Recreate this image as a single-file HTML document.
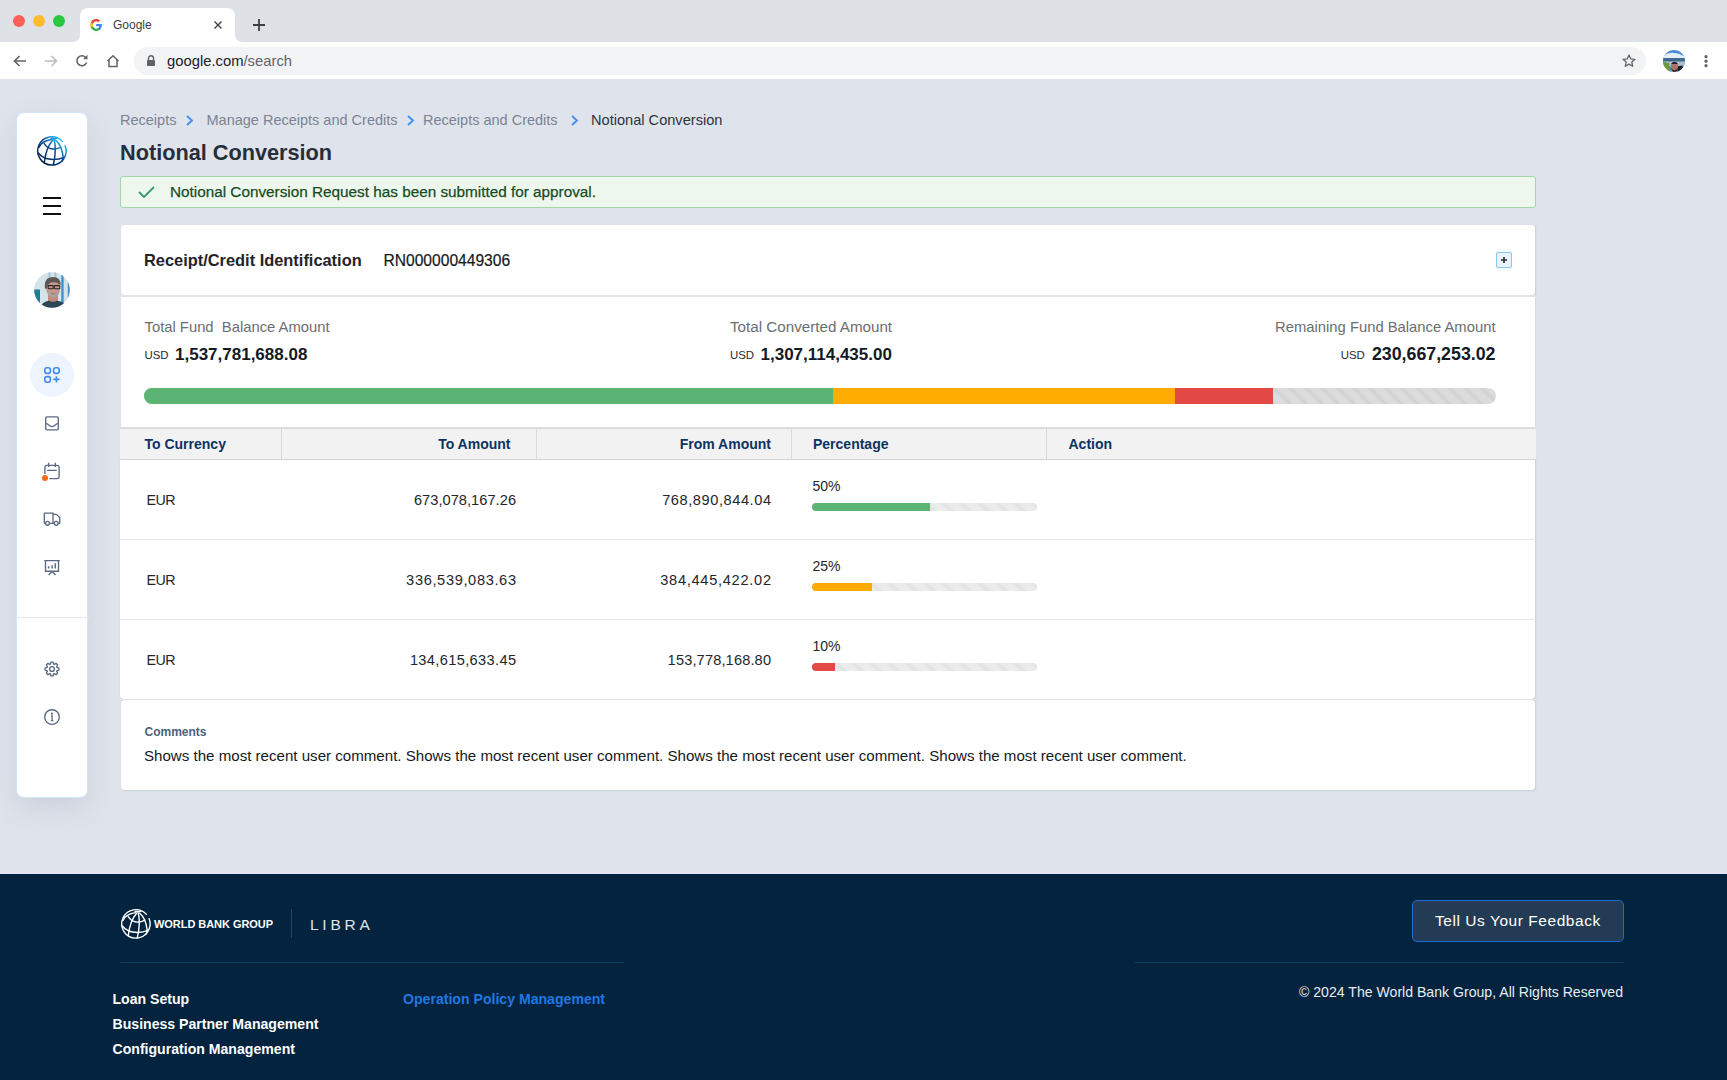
<!DOCTYPE html>
<html><head><meta charset="utf-8">
<style>
*{margin:0;padding:0;box-sizing:border-box}
html,body{width:1727px;height:1080px;overflow:hidden;background:#dfe3eb;font-family:"Liberation Sans",sans-serif}
.a{position:absolute;white-space:nowrap;line-height:1}
svg{position:absolute;overflow:visible}
#tabbar{position:absolute;left:0;top:0;width:1727px;height:42px;background:#dee1e6}
#toolbar{position:absolute;left:0;top:42px;width:1727px;height:37px;background:#fff}
.dot{position:absolute;width:12px;height:12px;border-radius:50%}
#tab{position:absolute;left:80px;top:8px;width:155px;height:34px;background:#fff;border-radius:8px 8px 0 0}
#pill{position:absolute;left:134px;top:47px;width:1512px;height:28px;background:#f1f3f4;border-radius:14px}
#side{position:absolute;left:17px;top:113px;width:70px;height:684px;background:#fff;border-radius:7px;box-shadow:0 0 0 1px #d3e5fb,0 10px 26px rgba(100,110,140,.17)}
.card{position:absolute;left:120px;width:1415px;background:#fff;box-shadow:.5px .5px 1.5px rgba(0,0,0,.09)}
.bc{font-size:14.5px;color:#7b8594;top:113px}
.lbl{font-size:14.8px;color:#6b6e73;top:320px}
.usd{font-size:11.4px;color:#262a30;top:350px}
.amt{font-size:17px;font-weight:700;color:#141a24;top:346px}
.th{font-size:14px;font-weight:700;color:#0c3363;top:437px}
.td{font-size:14.6px;color:#22262b}
.pct{font-size:14px;color:#22262b}
.pbar{position:absolute;left:812px;width:225px;height:8px;border-radius:4px;overflow:hidden;
 background:repeating-linear-gradient(45deg,#ebebeb 0 6.5px,#e3e3e3 9px,#e3e3e3 10.5px,#ebebeb 12.7px)}
.pbar i{position:absolute;left:0;top:0;height:8px}
.fl{font-size:14.1px;font-weight:700;color:#fff}
</style></head><body>

<!-- ============ BROWSER CHROME ============ -->
<div id="tabbar"></div>
<div class="dot" style="left:13px;top:15.3px;background:#fe5f57"></div>
<div class="dot" style="left:33px;top:15.3px;background:#febc2e"></div>
<div class="dot" style="left:53px;top:15.3px;background:#28c840"></div>
<div id="tab"></div>
<!-- tab flares -->
<svg style="left:72px;top:34px" width="8" height="8"><path d="M0 8 Q8 8 8 0 L8 8 Z" fill="#fff"/></svg>
<svg style="left:235px;top:34px" width="8" height="8"><path d="M8 8 Q0 8 0 0 L0 8 Z" fill="#fff"/></svg>
<!-- G icon -->
<svg style="left:88px;top:17px" width="16" height="16" viewBox="0 0 16 16">
 <circle cx="8" cy="8" r="7.6" fill="#fff" stroke="#dadce0" stroke-width=".5" stroke-dasharray="1 1"/>
 <g transform="translate(8 8) scale(1.22) translate(-7.85 -8)"><path d="M12.6 8.2c0-.4 0-.7-.1-1H8v1.9h2.6c-.1.6-.5 1.1-1 1.5v1.2h1.6c.9-.9 1.4-2.1 1.4-3.6z" fill="#4285f4"/>
 <path d="M8 12.9c1.3 0 2.4-.4 3.2-1.2l-1.6-1.2c-.4.3-1 .5-1.6.5-1.2 0-2.3-.8-2.6-2H3.7v1.3c.8 1.6 2.5 2.6 4.3 2.6z" fill="#34a853"/>
 <path d="M5.4 9c-.1-.3-.2-.6-.2-1s.1-.7.2-1V5.7H3.7C3.3 6.4 3.1 7.2 3.1 8s.2 1.6.6 2.3L5.4 9z" fill="#fbbc05"/>
 <path d="M8 5c.7 0 1.3.2 1.8.7l1.4-1.4C10.4 3.6 9.3 3.1 8 3.1c-1.8 0-3.5 1-4.3 2.6L5.4 7c.3-1.2 1.4-2 2.6-2z" fill="#ea4335"/>
</g></svg>
<div class="a" style="left:113px;top:18.5px;font-size:12px;color:#3c4043">Google</div>
<svg style="left:214px;top:21px" width="8" height="8"><path d="M0.5 0.5L7.5 7.5M7.5 0.5L0.5 7.5" stroke="#3c4043" stroke-width="1.4"/></svg>
<svg style="left:253px;top:19px" width="12" height="12"><path d="M6 0V12M0 6H12" stroke="#3c4043" stroke-width="1.8"/></svg>

<div id="toolbar"></div>
<!-- nav icons -->
<svg style="left:13px;top:55px" width="14" height="12"><path d="M13 6H2M6.5 1L1.5 6L6.5 11" stroke="#5f6368" stroke-width="1.6" fill="none"/></svg>
<svg style="left:44px;top:55px" width="14" height="12"><path d="M1 6H12M7.5 1L12.5 6L7.5 11" stroke="#b9bcc1" stroke-width="1.6" fill="none"/></svg>
<svg style="left:75px;top:54px" width="14" height="14"><path d="M11.6 8.5A5 5 0 1 1 10.5 3.2" stroke="#5f6368" stroke-width="1.6" fill="none"/><path d="M12.5 0.8V5.2H8.1Z" fill="#5f6368"/></svg>
<svg style="left:106px;top:54px" width="14" height="14"><path d="M1.5 7L7 1.8L12.5 7M3 5.8V12.5H11V5.8" stroke="#5f6368" stroke-width="1.5" fill="none" stroke-linejoin="miter"/></svg>
<div id="pill"></div>
<svg style="left:146px;top:55px" width="10" height="11"><path d="M2.5 5V3.3A2.5 2.5 0 0 1 7.5 3.3V5" stroke="#5f6368" stroke-width="1.4" fill="none"/><rect x="1" y="5" width="8" height="6" rx=".8" fill="#5f6368"/></svg>
<div class="a" style="left:167px;top:54px;font-size:14.8px;color:#202124">google.com<span style="color:#5f6368">/search</span></div>
<svg style="left:1622px;top:54px" width="14" height="13" viewBox="0 0 14 13"><path d="M7 1L8.8 4.9L13 5.3L9.8 8.1L10.7 12.2L7 10.1L3.3 12.2L4.2 8.1L1 5.3L5.2 4.9Z" stroke="#5f6368" stroke-width="1.3" fill="none" stroke-linejoin="round"/></svg>
<svg style="left:1663px;top:50px" width="22" height="22" viewBox="0 0 22 22">
 <defs><clipPath id="cav"><circle cx="11" cy="11" r="11"/></clipPath></defs>
 <g clip-path="url(#cav)">
  <rect width="22" height="22" fill="#4a8fd6"/>
  <path d="M0 6Q6 2 11 3Q16 3 22 7V10H0Z" fill="#e8eef5"/>
  <rect y="8" width="22" height="2.5" fill="#40699a"/>
  <rect y="10.5" width="22" height="1" fill="#3d5a3a"/>
  <rect y="11.5" width="22" height="5" fill="#a9bfd6"/>
  <path d="M0 12L6 13L8 22H0Z" fill="#6c9a3a"/>
  <path d="M13 16.5L19.5 15.5L21 22H13Z" fill="#1e1e24"/>
  <path d="M5 22Q11 17 17 22Z" fill="#9db0e2"/>
  <ellipse cx="11.5" cy="16.5" rx="3.6" ry="4.8" fill="#a8776a"/>
  <path d="M8 14Q11.5 9.5 15 14Z" fill="#2a2022"/>
  <path d="M8.2 18Q11.5 22.5 14.8 18Q14.5 22 11.5 22Q8.5 22 8.2 18Z" fill="#3a2a28"/>
 </g>
</svg>
<svg style="left:1704px;top:55px" width="4" height="13"><circle cx="2" cy="1.7" r="1.6" fill="#5f6368"/><circle cx="2" cy="6.2" r="1.6" fill="#5f6368"/><circle cx="2" cy="10.7" r="1.6" fill="#5f6368"/></svg>

<!-- ============ SIDEBAR ============ -->
<div id="side"></div>
<!-- globe -->
<svg style="left:37px;top:136px" width="30" height="30" viewBox="0 0 30 30">
 <defs><linearGradient id="gg" gradientUnits="userSpaceOnUse" x1="4" y1="26" x2="26" y2="4"><stop offset="0" stop-color="#001d4a"/><stop offset=".55" stop-color="#0a4a8e"/><stop offset=".82" stop-color="#1598e0"/><stop offset="1" stop-color="#3cc6ff"/></linearGradient></defs>
 <g fill="none" stroke="url(#gg)" stroke-width="1.5" stroke-linecap="round">
  <path d="M28.1 9.6A14.2 14.2 0 1 1 25.3 5.2"/>
  <path d="M17.2 3.6C18.8 10 18.8 18 16.3 29"/>
  <path d="M16 3.8C11.5 9 8.5 15 7.3 26.5"/>
  <path d="M18.6 4C22 7 25 12 26 20 L25.4 25"/>
  <path d="M7.2 7.6C10 11.5 14 13.5 18 13 C20.5 12.8 22.5 12 24 11.2"/>
  <path d="M1.3 17C4 20.5 9 23.5 16.5 23.5 C21 23.5 24.5 22.5 27.2 21.2"/>
  <path d="M2.2 11.2C4 7 8 4.5 14.5 3.6"/>
  <path d="M14 2.4L20 2.4" stroke-width="1.2"/>
 </g>
</svg>
<!-- hamburger -->
<svg style="left:43px;top:197px" width="18" height="18"><path d="M0 1H18M0 9H18M0 17H18" stroke="#111" stroke-width="2"/></svg>
<!-- avatar -->
<svg style="left:34px;top:272px" width="36" height="36" viewBox="0 0 36 36">
 <defs><clipPath id="cav2"><circle cx="18" cy="18" r="17.8"/></clipPath></defs>
 <g clip-path="url(#cav2)">
  <rect width="36" height="36" fill="#d5e3ea"/>
  <rect x="27.3" y="0" width="2.3" height="36" fill="#3f8dc9"/>
  <rect x="33.8" y="8" width="2.5" height="22" fill="#3f8fc8"/>
  <rect x="14.5" y="0" width="1.8" height="5" fill="#9dc0da"/>
  <rect x="20.5" y="0" width="1.8" height="5" fill="#9dc0da"/>
  <rect x="0" y="17.5" width="6" height="13.5" fill="#1d7f96"/>
  <rect x="14" y="21" width="10" height="9" fill="#c08c7e"/>
  <path d="M6 36Q8 29.5 15 28.7Q19 31 23 28.7Q31 29.5 34 36Z" fill="#2b4753"/>
  <ellipse cx="19.2" cy="16.2" rx="7" ry="8.8" fill="#c9968a"/>
  <path d="M11 16.5Q9.5 5 19 5Q27.2 5 26.6 13.5Q24 9.8 18.5 10.2Q13.5 10.6 12.6 17Z" fill="#5e5854"/>
  <rect x="14.2" y="13.6" width="5" height="3.2" rx=".6" fill="none" stroke="#262626" stroke-width="1.1"/>
  <rect x="20.2" y="13.6" width="5.6" height="3.2" rx=".6" fill="none" stroke="#262626" stroke-width="1.1"/>
  <path d="M13.6 19.2Q19 22.8 25.2 19.2Q25.2 25 19.2 25.4Q13.6 25 13.6 19.2Z" fill="#aaa29e"/>
  <path d="M17 21.3Q19.2 22.3 21.5 21.3" stroke="#b5605a" stroke-width=".8" fill="none"/>
 </g>
</svg>
<!-- active item -->
<div style="position:absolute;left:30px;top:353px;width:44px;height:44px;border-radius:50%;background:#edf4fd"></div>
<svg style="left:44px;top:367px" width="16" height="16" viewBox="0 0 16 16" fill="none" stroke="#3d8bf2" stroke-width="1.6">
 <rect x="0.8" y="0.8" width="5.6" height="5.6" rx="2.2"/><rect x="9.6" y="0.8" width="5.6" height="5.6" rx="2.2"/>
 <rect x="0.8" y="9.6" width="5.6" height="5.6" rx="2.2"/><path d="M12.4 9.2V15.6M9.2 12.4H15.6"/>
</svg>
<!-- inbox -->
<svg style="left:44px;top:415px" width="16" height="16" viewBox="0 0 16 16" fill="none" stroke="#5b6a82" stroke-width="1.35">
 <rect x="1.7" y="1.8" width="12.6" height="13" rx="1.3"/><path d="M1.7 8.6Q3 8.4 4.3 9.6Q6 11.6 8 11.6Q10 11.6 11.7 9.6Q13 8.4 14.3 8.6"/>
</svg>
<!-- calendar -->
<svg style="left:44px;top:462px" width="16" height="17" viewBox="0 0 16 17" fill="none" stroke="#5b6a82" stroke-width="1.35">
 <path d="M0.9 12V5.2Q0.9 3.3 2.8 3.3H13.2Q15.1 3.3 15.1 5.2V14.9Q15.1 16.6 13.4 16.6H5.3"/><path d="M4.6 0.8V5M11.3 0.8V5M3.2 8.3H12.7"/>
</svg>
<div style="position:absolute;left:42px;top:474.7px;width:6px;height:6px;border-radius:50%;background:#f26a1b"></div>
<!-- truck -->
<svg style="left:43px;top:512px" width="18" height="14" viewBox="0 0 18 14" fill="none" stroke="#5b6a82" stroke-width="1.35">
 <path d="M2.6 11.4H1.9Q1.3 11.4 1.3 10.8V1.7Q1.3 1.1 1.9 1.1H10V11.4H6.4M10 2.3H13.4L16.7 5.6V10.8Q16.7 11.4 16.1 11.4H15.1M10 11.4H11.3"/><circle cx="4.5" cy="11.3" r="1.9"/><circle cx="13.2" cy="11.3" r="1.9"/>
</svg>
<!-- presentation -->
<svg style="left:44px;top:559px" width="16" height="17" viewBox="0 0 16 17" fill="none" stroke="#5b6a82" stroke-width="1.35">
 <path d="M0.3 1.6H15.8M1.5 1.6V12.2H14.5V1.6M4.6 16L8.1 12.5L11.6 16"/><path d="M4.6 7.3V9.4M8.1 6.2V9.4M11.3 4.3V9.4" stroke-width="1.5"/>
</svg>
<div style="position:absolute;left:16px;top:617px;width:73px;height:1px;background:#e6e9ee"></div>
<!-- gear -->
<svg style="left:44px;top:661px" width="16" height="16" viewBox="0 0 16 16" fill="none" stroke="#5b6a82" stroke-width="1.35" stroke-linejoin="round">
 <circle cx="8" cy="8" r="2.4"/>
 <path d="M6.46 3.03 L6.82 1.10 L9.18 1.10 L9.54 3.03 L10.43 3.40 L12.04 2.28 L13.72 3.96 L12.60 5.57 L12.97 6.46 L14.90 6.82 L14.90 9.18 L12.97 9.54 L12.60 10.43 L13.72 12.04 L12.04 13.72 L10.43 12.60 L9.54 12.97 L9.18 14.90 L6.82 14.90 L6.46 12.97 L5.57 12.60 L3.96 13.72 L2.28 12.04 L3.40 10.43 L3.03 9.54 L1.10 9.18 L1.10 6.82 L3.03 6.46 L3.40 5.57 L2.28 3.96 L3.96 2.28 L5.57 3.40Z"/>
</svg>
<!-- info -->
<svg style="left:44px;top:709px" width="16" height="16" viewBox="0 0 16 16" fill="none" stroke="#5b6a82" stroke-width="1.35">
 <circle cx="8" cy="8" r="7.3"/><path d="M7 6.9H8.1V11.5M6.9 11.6H9.3" stroke-width="1.3"/><circle cx="8" cy="4.7" r=".45" fill="#5b6a82"/>
</svg>

<!-- ============ CONTENT ============ -->
<div class="a bc" style="left:120px">Receipts</div>
<svg style="left:186px;top:115px" width="7" height="11"><path d="M1 1L6 5.5L1 10" stroke="#3f8ef5" stroke-width="1.8" fill="none"/></svg>
<div class="a bc" style="left:206.5px">Manage Receipts and Credits</div>
<svg style="left:407px;top:115px" width="7" height="11"><path d="M1 1L6 5.5L1 10" stroke="#3f8ef5" stroke-width="1.8" fill="none"/></svg>
<div class="a bc" style="left:423px">Receipts and Credits</div>
<svg style="left:571px;top:115px" width="7" height="11"><path d="M1 1L6 5.5L1 10" stroke="#3f8ef5" stroke-width="1.8" fill="none"/></svg>
<div class="a bc" style="left:591px;color:#2d3440;font-size:14.6px">Notional Conversion</div>

<div class="a" style="left:120px;top:141.5px;font-size:21.7px;font-weight:700;color:#272e39">Notional Conversion</div>

<!-- alert -->
<div style="position:absolute;left:120px;top:176px;width:1416px;height:32px;background:#eef7ee;border:1px solid #a3d8a6;border-radius:3px"></div>
<svg style="left:138px;top:186px" width="17" height="12"><path d="M1 6L6 11L16 1" stroke="#389a6a" stroke-width="1.8" fill="none"/></svg>
<div class="a" style="left:170px;top:184.4px;font-size:15.3px;color:#184c25;-webkit-text-stroke:.25px #184c25">Notional Conversion Request has been submitted for approval.</div>

<!-- card 1 -->
<div class="card" style="top:225px;height:70px;border-radius:3px;left:121px;width:1414px"></div>
<div style="position:absolute;left:120px;top:295px;width:1416px;height:2px;background:#e4e4e4"></div>
<div class="a" style="left:144px;top:252px;font-size:16.4px;font-weight:700;color:#1f242b">Receipt/Credit Identification</div>
<div class="a" style="left:383.5px;top:252.5px;font-size:15.6px;color:#14181d;-webkit-text-stroke:.2px #14181d">RN000000449306</div>
<div style="position:absolute;left:1496px;top:252px;width:16px;height:16px;border:1px solid #86c8ef;background:#e8f2fa;border-radius:2px"></div>
<svg style="left:1501px;top:257px" width="6" height="6"><path d="M3 0V6M0 3H6" stroke="#2a2f36" stroke-width="1.7"/></svg>

<!-- card 2 -->
<div class="card" style="top:297px;height:130px;left:121px;width:1414px"></div>
<div class="a lbl" style="left:144.5px">Total Fund&nbsp; Balance Amount</div>
<div class="a usd" style="left:144.5px">USD</div>
<div class="a amt" style="left:175px">1,537,781,688.08</div>
<div class="a lbl" style="left:730px;font-size:15.2px;top:319px">Total Converted Amount</div>
<div class="a usd" style="left:730px">USD</div>
<div class="a amt" style="left:760.5px">1,307,114,435.00</div>
<div class="a lbl" style="right:231.5px">Remaining Fund Balance Amount</div>
<div class="a usd" style="left:1340.8px">USD</div>
<div class="a amt" style="right:231.5px;font-size:17.8px;top:345.8px">230,667,253.02</div>
<div style="position:absolute;left:144px;top:388px;width:1352px;height:16px;border-radius:8px;overflow:hidden;background:repeating-linear-gradient(45deg,#dcdcdc 0 5px,#d2d2d2 7.5px,#d2d2d2 8.5px,#dcdcdc 11.3px)">
 <div style="position:absolute;left:0;top:0;width:689px;height:16px;background:#5bb474"></div>
 <div style="position:absolute;left:689px;top:0;width:342px;height:16px;background:#ffab00"></div>
 <div style="position:absolute;left:1031px;top:0;width:98px;height:16px;background:#e34a47"></div>
</div>

<!-- table -->
<div style="position:absolute;left:120px;top:427px;width:1416px;height:2px;background:#dcdcdc"></div>
<div style="position:absolute;left:120px;top:429px;width:1416px;height:30px;background:#f2f2f2"></div>
<div style="position:absolute;left:120px;top:459px;width:1416px;height:1px;background:#d9d9d9"></div>
<div style="position:absolute;left:281px;top:429px;width:1px;height:30px;background:#dadada"></div>
<div style="position:absolute;left:536px;top:429px;width:1px;height:30px;background:#dadada"></div>
<div style="position:absolute;left:791px;top:429px;width:1px;height:30px;background:#dadada"></div>
<div style="position:absolute;left:1046px;top:429px;width:1px;height:30px;background:#dadada"></div>
<div class="a th" style="left:144.5px">To Currency</div>
<div class="a th" style="right:1216.5px">To Amount</div>
<div class="a th" style="right:956px">From Amount</div>
<div class="a th" style="left:813px">Percentage</div>
<div class="a th" style="left:1068.5px">Action</div>

<div class="card" style="top:460px;height:239px;border-radius:0 0 4px 4px"></div>
<div style="position:absolute;left:120px;top:539px;width:1416px;height:1px;background:#e6e6e6"></div>
<div style="position:absolute;left:120px;top:619px;width:1416px;height:1px;background:#e6e6e6"></div>
<div style="position:absolute;left:120px;top:699px;width:1416px;height:1px;background:#e6e6e6"></div>

<div class="a td" style="left:146.4px;top:492.6px;font-size:14.3px;letter-spacing:-.5px">EUR</div>
<div class="a td" style="right:1210.95px;top:492.5px;letter-spacing:0.05px">673,078,167.26</div>
<div class="a td" style="right:955.43px;top:492.5px;letter-spacing:0.57px">768,890,844.04</div>
<div class="a pct" style="left:812.5px;top:478.5px">50%</div>
<div class="pbar" style="top:503px"><i style="width:118px;background:#5bb474"></i></div>

<div class="a td" style="left:146.4px;top:572.6px;font-size:14.3px;letter-spacing:-.5px">EUR</div>
<div class="a td" style="right:1210.35px;top:572.5px;letter-spacing:0.65px">336,539,083.63</div>
<div class="a td" style="right:955.28px;top:572.5px;letter-spacing:0.72px">384,445,422.02</div>
<div class="a pct" style="left:812.5px;top:558.5px">25%</div>
<div class="pbar" style="top:583px"><i style="width:60px;background:#ffab00"></i></div>

<div class="a td" style="left:146.4px;top:652.6px;font-size:14.3px;letter-spacing:-.5px">EUR</div>
<div class="a td" style="right:1210.64px;top:652.5px;letter-spacing:0.36px">134,615,633.45</div>
<div class="a td" style="right:955.85px;top:652.5px;letter-spacing:0.15px">153,778,168.80</div>
<div class="a pct" style="left:812.5px;top:638.5px">10%</div>
<div class="pbar" style="top:663px"><i style="width:23px;background:#e34a47"></i></div>

<!-- comments -->
<div class="card" style="top:700px;height:90px;border-radius:4px;left:121px;width:1414px"></div>
<div class="a" style="left:144.5px;top:726px;font-size:12px;font-weight:700;color:#4b6281">Comments</div>
<div class="a" style="left:144px;top:748px;font-size:15.1px;color:#15191e">Shows the most recent user comment. Shows the most recent user comment. Shows the most recent user comment. Shows the most recent user comment.</div>

<!-- ============ FOOTER ============ -->
<div style="position:absolute;left:0;top:874px;width:1727px;height:206px;background:#03233f"></div>
<svg style="left:121px;top:909px" width="30" height="30" viewBox="0 0 30 30">
 <g fill="none" stroke="#fff" stroke-width="1.4" stroke-linecap="round">
  <path d="M28.1 9.6A14.2 14.2 0 1 1 25.3 5.2"/>
  <path d="M17.2 3.6C18.8 10 18.8 18 16.3 29"/>
  <path d="M16 3.8C11.5 9 8.5 15 7.3 26.5"/>
  <path d="M18.6 4C22 7 25 12 26 20 L25.4 25"/>
  <path d="M7.2 7.6C10 11.5 14 13.5 18 13 C20.5 12.8 22.5 12 24 11.2"/>
  <path d="M1.3 17C4 20.5 9 23.5 16.5 23.5 C21 23.5 24.5 22.5 27.2 21.2"/>
  <path d="M2.2 11.2C4 7 8 4.5 14.5 3.6"/>
  <path d="M14 2.4L20 2.4" stroke-width="1.2"/>
 </g>
</svg>
<div class="a" style="left:154px;top:919px;font-size:11px;font-weight:700;color:#fff;letter-spacing:-0.05px">WORLD BANK GROUP</div>
<div style="position:absolute;left:291px;top:909px;width:1px;height:29px;background:#1f4868"></div>
<div class="a" style="left:310px;top:916.6px;font-size:15.5px;color:#dfe4ea;letter-spacing:3.75px">LIBRA</div>
<div style="position:absolute;left:120px;top:962px;width:504px;height:1px;background:#0e3d62"></div>
<div style="position:absolute;left:1135px;top:962px;width:489px;height:1px;background:#0e3d62"></div>

<div class="a fl" style="left:112.5px;top:992px">Loan Setup</div>
<div class="a fl" style="left:112.5px;top:1017px">Business Partner Management</div>
<div class="a fl" style="left:112.5px;top:1042px">Configuration Management</div>
<div class="a fl" style="left:403px;top:992px;color:#2277e0">Operation Policy Management</div>

<div style="position:absolute;left:1412px;top:900px;width:212px;height:42px;border:1.6px solid #1b6dd3;background:#233b55;border-radius:5px"></div>
<div class="a" style="left:1435px;top:913px;font-size:15.5px;color:#fff;letter-spacing:.55px">Tell Us Your Feedback</div>
<div class="a" style="right:104px;top:985px;font-size:14.1px;color:#e8ecf0">© 2024 The World Bank Group, All Rights Reserved</div>

</body></html>
